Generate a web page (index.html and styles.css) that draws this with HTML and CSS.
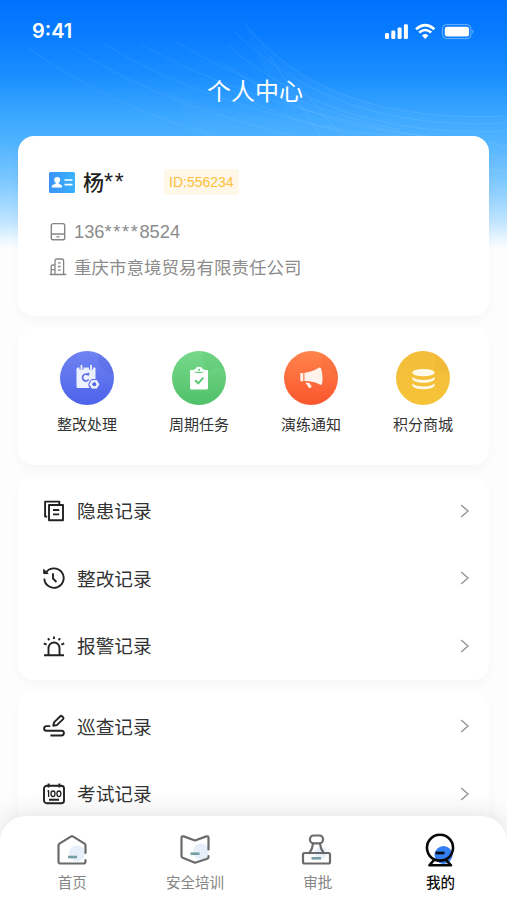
FILE: index.html
```html
<!DOCTYPE html>
<html lang="zh-CN">
<head>
<meta charset="utf-8">
<title>个人中心</title>
<link rel="stylesheet" href="styles.css">
</head>
<body>
<div class="screen">
  <svg class="waves" viewBox="0 0 507 245" fill="none" stroke="#fff" aria-hidden="true">
    <g opacity=".07">
      <path d="M28 48C95 95 150 116 225 140"/><path d="M70 46C135 88 200 112 300 138"/>
      <path d="M105 44C170 84 240 108 360 136"/><path d="M140 44C200 78 290 112 420 136"/>
      <path d="M175 42C235 74 300 108 400 130"/>
    </g>
    <path d="M243 20C290 75 350 120 507 116V245H300C250 190 200 130 165 90C210 110 235 110 290 120C270 80 255 55 243 20Z" fill="#fff" stroke="none" opacity=".02"/>
    <g opacity=".09" stroke-width=".9">
      <path d="M245 24C290 78 360 122 507 116"/><path d="M235 32C290 86 370 130 507 123"/>
      <path d="M228 45C285 97 380 138 507 131"/><path d="M220 60C285 110 350 130 430 136"/>
      <path d="M215 80C270 118 330 132 400 136"/><path d="M270 56L320 136"/><path d="M295 82L342 136"/>
      <path d="M489 142L507 148M489 155L507 160M489 168L507 172"/>
    </g>
  </svg>

  <header class="status">
    <span class="time">9:41</span>
    <svg class="signals" width="92" height="18" viewBox="0 0 92 18" fill="#fff">
      <rect x="1" y="10" width="4" height="6" rx="1.3"/><rect x="7.3" y="7.5" width="4" height="8.5" rx="1.3"/>
      <rect x="13.6" y="4.5" width="4" height="11.5" rx="1.3"/><rect x="19.9" y="1.3" width="4" height="14.7" rx="1.3"/>
      <g fill="none" stroke="#fff" stroke-width="2.6"><path d="M32 6.2Q41.2-2 50.4 6.2"/><path d="M35.2 9.6Q41.2 4.4 47.2 9.6"/></g>
      <path d="M38 12.4Q41.2 9.8 44.4 12.4L41.2 15.9Z"/>
      <rect x="58.6" y="1.6" width="28.3" height="14" rx="4" fill="none" stroke="#fff" stroke-opacity=".42"/>
      <rect x="60.8" y="3.7" width="24.2" height="9.9" rx="2.3"/><path d="M88.4 6.5Q90.4 8.6 88.4 10.7Z" opacity=".5"/>
    </svg>
  </header>
  <h1 class="title">个人中心</h1>

  <main class="content">
    <section class="card profile">
      <div class="name-row">
        <svg width="26" height="21" viewBox="0 0 26 21"><defs><linearGradient id="idc" x2="1"><stop stop-color="#3b93fa"/><stop offset="1" stop-color="#38b2fc"/></linearGradient></defs>
          <rect width="26" height="21" rx="1.5" fill="url(#idc)"/><circle cx="8.2" cy="8" r="3" fill="#fff"/><path d="M7 9h2.4v2.2l3.6 2.2v2H2.8v-2L7 11.2Z" fill="#fff"/><path d="M15.5 8h8M15.5 12.6h8" stroke="#fff" stroke-width="1.6"/></svg>
        <strong class="name">杨<span class="mask">**</span></strong>
        <span class="badge">ID:556234</span>
      </div>
      <div class="info phone">
        <svg width="18" height="20" viewBox="0 0 18 20" fill="none" stroke="#858585" stroke-width="1.4"><rect x="2.3" y="1.6" width="13.4" height="16.2" rx="1.8"/><path d="M2.3 12h13.4M7.4 14.9h3.2"/></svg>
        <span>136<span class="mask">****</span>8524</span>
      </div>
      <div class="info company">
        <svg width="18" height="20" viewBox="0 0 18 20" fill="none" stroke="#858585" stroke-width="1.3"><path d="M6 17.3V3.6Q6 2 7.6 2h5.2q1.8 0 1.8 1.8v13.5M6 8H3.8Q2.2 8 2.2 9.6v7.7M.7 17.5h16.6M9 5.8h2.7M9 9.5h2.7M9 13.2h2.7M2.2 12.6H6"/></svg>
        <span>重庆市意境贸易有限责任公司</span>
      </div>
    </section>

    <nav class="card services">
      <a class="service"><span class="disc blue"><svg width="54" height="54" viewBox="0 0 54 54">
        <path d="M38 0L54 0V24Q42 22 38 10Z" fill="#243bbd" opacity=".1"/>
        <path d="M18 16.5h16.5a1 1 0 0 1 1 1V28a6 6 0 0 0-6 9H18a1.5 1.5 0 0 1-1.5-1.5V18a1.5 1.5 0 0 1 1.5-1.5Z" fill="#edf0ff"/>
        <path d="M21.5 14.5v4M31 14.5v4" stroke="#5a6ce8" stroke-width="4"/><path d="M21.5 14.8v3M31 14.8v3" stroke="#edf0ff" stroke-width="2" stroke-linecap="round"/>
        <path d="M28.7 28.6A3.4 3.4 0 1 1 28 23.8M28.4 21.8v2.8" fill="none" stroke="#5368e6" stroke-width="1.6"/>
        <path d="M31.5 28.6h5.6l2.8 4.7-2.8 4.8h-5.6l-2.8-4.8Z" fill="#edf0ff" stroke="#596de9"/><circle cx="34.3" cy="33.3" r="2" fill="#5569e6"/></svg></span><span>整改处理</span></a>
      <a class="service"><span class="disc green"><svg width="54" height="54" viewBox="0 0 54 54">
        <path d="M37 20Q45 12 54 21V0H30Q31 13 37 20Z" fill="#259a43" opacity=".08"/>
        <path d="M19 19h2q1 3 4 3h4q3 0 4-3h2a1 1 0 0 1 1 1v17a1.5 1.5 0 0 1-1.5 1.5h-15A1.5 1.5 0 0 1 18 37V20a1 1 0 0 1 1-1Z" fill="#fff"/>
        <path d="M21.2 20.7v-1.2q0-1.5 2.3-1.5.5-2.2 3.5-2.2t3.5 2.2q2.3 0 2.3 1.5v1.2Z" fill="#fff"/><circle cx="27" cy="18.8" r="1" fill="#5bc873"/>
        <path d="M23.2 29.2l3 3.1 5.2-5.7" fill="none" stroke="#5bc873" stroke-width="2"/></svg></span><span>周期任务</span></a>
      <a class="service"><span class="disc orange"><svg width="54" height="54" viewBox="0 0 54 54">
        <path d="M35 24Q45 13 54 26V0H38Z" fill="#c9421b" opacity=".08"/>
        <path d="M16.3 22h3v8.2h-2.2q-.8 0-.8-.8Z" fill="#fff3ec"/><path d="M20.4 21.9Q29 20.5 34.8 16.8q2-1 2.5 1.5 2 8 .8 14.3-.4 2.1-2.3 1Q30 30.3 20.4 30.1Z" fill="#fff3ec"/><path d="M21.5 31.5l4 .4 2.2 3.7q-1.1 2.2-3.1.8Z" fill="#fff3ec"/></svg></span><span>演练通知</span></a>
      <a class="service"><span class="disc yellow"><svg width="54" height="54" viewBox="0 0 54 54">
        <path d="M38 24Q47 16 54 25V0H40Z" fill="#c78b17" opacity=".08"/>
        <ellipse cx="27.5" cy="21.6" rx="11.3" ry="3.6" fill="#fffbea"/><path d="M16.3 26v2q2.2 3.8 11.2 3.8t11.2-3.8v-2q-3.2 3-11.2 3T16.3 26Zm0 6.4v2q2.2 3.8 11.2 3.8t11.2-3.8v-2q-3.2 3-11.2 3t-11.2-3Z" fill="#fffbea"/></svg></span><span>积分商城</span></a>
    </nav>

    <nav class="card menu">
      <a class="item"><svg class="icon" width="24" height="24" viewBox="0 0 24 24"><path d="M5.2 17.6H3.1V2.6h14.2v2.3"/><path d="M7 6h14v15.2H7Z"/><path d="M11 11h6.2M11 15.4h6.2"/></svg><span>隐患记录</span><svg class="chevron" width="10" height="16" viewBox="0 0 10 16"><path d="M1.2 2L8 8l-6.8 6"/></svg></a>
      <a class="item"><svg class="icon" width="24" height="24" viewBox="0 0 24 24"><path d="M3.6 7.2A9.7 9.7 0 1 1 2.3 12.6M11 7.3v5.2l3.4 3.5"/><path d="M1.7 3.4L6.2 7.6H1.7Z" fill="#222" stroke-width="1"/></svg><span>整改记录</span><svg class="chevron" width="10" height="16" viewBox="0 0 10 16"><path d="M1.2 2L8 8l-6.8 6"/></svg></a>
      <a class="item"><svg class="icon" width="24" height="24" viewBox="0 0 24 24"><path d="M2 21.2h20M6.5 21v-7a5.5 5.5 0 0 1 11 0v7"/><path d="M12 2.4v2.5M6 4.2l1.3 2.1M18 4.2l-1.3 2.1M1.8 9.3l2.8 1.3M22.2 9.3l-2.8 1.3"/></svg><span>报警记录</span><svg class="chevron" width="10" height="16" viewBox="0 0 10 16"><path d="M1.2 2L8 8l-6.8 6"/></svg></a>
    </nav>

    <nav class="card menu last">
      <a class="item"><svg class="icon" width="24" height="24" viewBox="0 0 24 24"><path d="M8.2 12.1H4.4a2.3 2.3 0 0 0 0 4.6h15.1a2.4 2.4 0 0 1 0 4.8H8.4"/><path d="M11.3 11.8l.7-3.4 6.3-6.2q.8-.7 1.6 0l1.3 1.3q.7.8 0 1.6l-6.4 6Z"/></svg><span>巡查记录</span><svg class="chevron" width="10" height="16" viewBox="0 0 10 16"><path d="M1.2 2L8 8l-6.8 6"/></svg></a>
      <a class="item"><svg class="icon" width="24" height="24" viewBox="0 0 24 24"><rect x="2" y="3.8" width="20" height="17.4" rx="2.8"/><path d="M6.6 1.4v4M17.4 1.4v4M7 17.7h10"/><path stroke-width="1.3" d="M5.6 9.4l1-.7v6.2"/><ellipse stroke-width="1.3" cx="11" cy="11.8" rx="2" ry="2.8"/><ellipse stroke-width="1.3" cx="16.9" cy="11.8" rx="2" ry="2.8"/></svg><span>考试记录</span><svg class="chevron" width="10" height="16" viewBox="0 0 10 16"><path d="M1.2 2L8 8l-6.8 6"/></svg></a>
    </nav>
  </main>

  <footer class="tabs">
    <a class="tab"><svg width="34" height="34" viewBox="0 0 34 34"><circle cx="22" cy="20.5" r="8" fill="#e7effb"/><path d="M30.5 20V12.5q0-1.2-1-1.9L18.2 3.6q-1.2-.8-2.4 0L4.5 10.6q-1 .7-1 1.9v16q0 2 2 2h23q2 0 2-2v-1.3" /><path class="dash" d="M13 24h9"/></svg><span>首页</span></a>
    <a class="tab"><svg width="34" height="34" viewBox="0 0 34 34"><circle cx="23" cy="18.5" r="8" fill="#e7effb"/><path d="M30.5 16.5V5q0-2.2-2.2-1.6L17 7.5 5.7 3.4Q3.5 2.8 3.5 5v18q0 1.4 1.2 1.8L17 29.8l12.3-4q1.2-.4 1.2-1.8v-1"/><path class="dash" d="M12.5 20.7h9"/></svg><span>安全培训</span></a>
    <a class="tab shifted"><svg width="34" height="34" viewBox="0 0 34 34"><circle cx="22" cy="20" r="6" fill="#e7effb"/><rect x="11" y="2.5" width="13" height="7.8" rx="3.6"/><path d="M14 10.5q-.3 5-3.6 9.5M21 10.5q.3 5 3.6 9.5"/><rect x="4" y="20" width="27" height="10.5" rx="1.5"/><path class="dash" d="M12.5 25.3h9.5"/></svg><span>审批</span></a>
    <a class="tab active"><svg width="34" height="34" viewBox="0 0 34 34"><circle cx="20.5" cy="22" r="9" fill="#347ff3"/><path d="M11.4 26.5A13 13 0 1 1 22.6 26.5Q17 28.8 11.4 26.5L6.4 32.3h21.6L22.6 26.5"/><path class="dash" d="M12.5 20h9"/></svg><span>我的</span></a>
  </footer>
</div>
</body>
</html>
```
FILE: styles.css
```css
* { box-sizing: border-box; }
body { margin: 0; font-family: "Liberation Sans", "Noto Sans CJK SC", sans-serif; color: #333; }
svg { display: block; flex: none; }

.screen {
  position: relative;
  width: 507px;
  height: 900px;
  overflow: hidden;
  background: linear-gradient(#0071ff 0, #087cff 34px, #1a8eff 75px, #3ca8ff 118px, #4db2ff 140px, #7bc7ff 180px, #bce3ff 220px, #f3faff 243px, #fdfdfd 249px);
}
.waves { position: absolute; inset: 0 auto auto 0; width: 507px; height: 245px; }

.status {
  position: relative;
  display: flex;
  justify-content: space-between;
  align-items: center;
  height: 60px;
  padding: 2px 31px 0 32px;
}
.time { color: #fff; font: 600 20px/24px Inter, sans-serif; }
.signals { margin-top: 2px; }
.title {
  position: relative;
  margin: 0;
  padding-left: 3px;
  height: 76px;
  color: #fff;
  font-size: 24px;
  font-weight: 400;
  line-height: 63px;
  text-align: center;
}

.content { position: relative; display: flex; flex-direction: column; gap: 12px; padding: 0 18px; }
.card { background: #fff; border-radius: 16px; box-shadow: 0 5px 12px rgba(0, 0, 0, .026); }

.profile { height: 180px; padding: 32px 31px; }
.name-row { display: flex; align-items: center; height: 28px; }
.name { margin-left: 8px; width: 81px; color: #222; font: 500 21px/28px "Liberation Sans", "Noto Sans CJK SC", sans-serif; }
.name .mask { font-size: 23px; letter-spacing: 1.7px; }
.badge { padding: 0 5px; background: #fff7e8; border-radius: 3px; color: #fdbf3c; font-size: 14px; line-height: 26px; }
.info { display: flex; align-items: center; gap: 7px; height: 35px; color: #8c8c8c; font-size: 17.5px; }
.phone { margin-top: 18px; font-size: 18.3px; }
.phone .mask { letter-spacing: 1.6px; }

.services { display: grid; grid-template-columns: repeat(4, 112px); height: 137px; padding: 23px 13px 0; }
.service { display: flex; flex-direction: column; align-items: center; gap: 9px; font-size: 15px; line-height: 22px; }
.disc { border-radius: 50%; overflow: hidden; }
.blue { background: linear-gradient(#7083f2, #4d63ea); }
.green { background: linear-gradient(#77d98a, #50c16a); }
.orange { background: linear-gradient(#ff844c, #fa562e); }
.yellow { background: linear-gradient(#f3bd3b, #f6c338); }

.item { display: flex; align-items: center; height: 67.5px; padding: 0 19px 0 24px; font-size: 18.7px; }
.item span { padding-bottom: 2px; }
.last { padding-top: 1px; }
.icon { margin-right: 11px; fill: none; stroke: #222; stroke-width: 1.9; stroke-linejoin: round; }
.chevron { margin-left: auto; fill: none; stroke: #999; stroke-width: 1.5; }

.tabs {
  position: absolute;
  inset: auto 0 0;
  display: grid;
  grid-template-columns: repeat(4, 122.7px);
  height: 84px;
  padding: 17px 0 0 11px;
  background: #fff;
  border-radius: 26px 26px 0 0;
  box-shadow: 0 -3px 24px rgba(0, 0, 0, .11);
}
.tab { display: flex; flex-direction: column; align-items: center; gap: 5px; color: #858585; font-size: 14.5px; line-height: 22px; }
.tab svg { fill: none; stroke: #6b6b6b; stroke-width: 2.2; stroke-linecap: round; stroke-linejoin: round; }
.tab svg circle[fill] { stroke: none; }
.tab .dash { stroke: #759da4; stroke-width: 2.6; stroke-linecap: butt; }
.shifted svg { margin-right: 3px; }
.tab.active { color: #111; font-weight: 500; }
.tab.active svg, .tab.active .dash { stroke: #080808; stroke-width: 2.6; }
```
